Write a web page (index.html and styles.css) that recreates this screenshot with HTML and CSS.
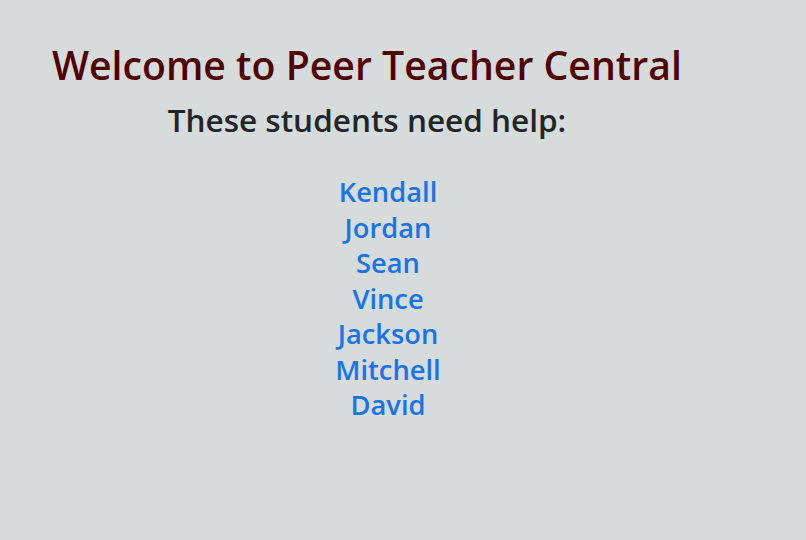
FILE: index.html
```html
<!DOCTYPE html>
<html lang="en">
<head>
<meta charset="UTF-8">
<title>Peer Teacher Central</title>
<link rel="stylesheet" href="styles.css">
</head>
<body>
<div class="page">
    <div class="header">
        <h1 class="title">Welcome to Peer Teacher Central</h1>
        <h2 class="subtitle">These students need help:</h2>
    </div>

    <!-- liste des étudiants en attente -->
    <ul class="students">
        <li><a href="#">Kendall</a></li>
        <li><a href="#">Jordan</a></li>
        <li><a href="#">Sean</a></li>
        <li><a href="#">Vince</a></li>
        <li><a href="#">Jackson</a></li>
        <li><a href="#">Mitchell</a></li>
        <li><a href="#">David</a></li>
    </ul>
</div>
</body>
</html>
```

FILE: styles.css
```css
body, html {
    margin: 0;
    height: 100%;
    background-color: #d6dbdc;
    font-family: "Open Sans", "Noto Sans", sans-serif;
}
.page {
    display: flex;
    flex-direction: column;
    padding: 39px 0 0 52px;
}
.header {
    display: flex;
    flex-direction: column;
    align-items: center;
    align-self: flex-start;
}
.title {
    margin: 0;
    font-size: 39.2px;
    font-weight: 600;
    line-height: 52px;
    color: #500000;
}
.subtitle {
    margin: 9px 0 0 0;
    font-size: 31.5px;
    font-weight: 600;
    line-height: 40px;
    color: #212529;
}
.students {
    list-style: none;
    margin: 34px 0 0 0;
    padding: 0;
    width: 672px;
    text-align: center;
}
.students li {
    font-size: 27.3px;
    line-height: 35.5px;
    font-weight: 600;
}
.students a {
    color: #1a74e8;
    text-decoration: none;
}
```
